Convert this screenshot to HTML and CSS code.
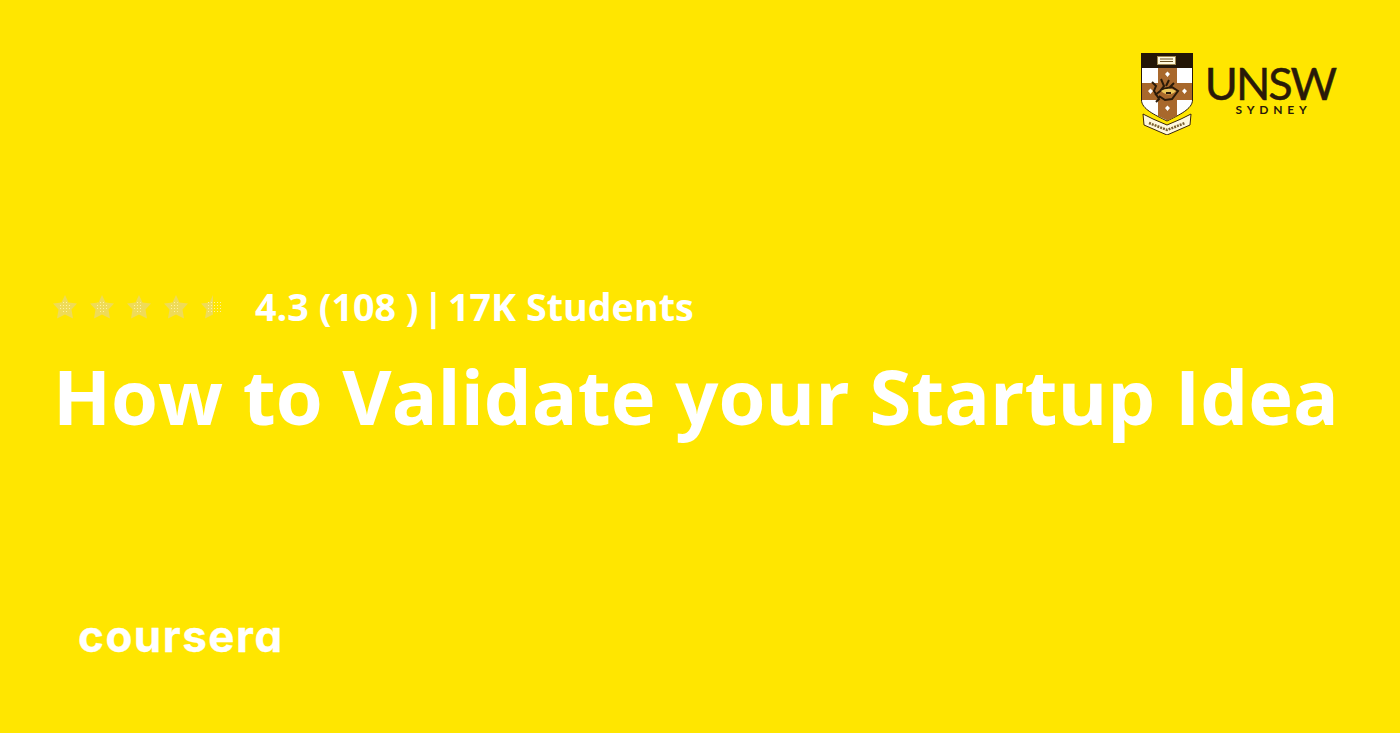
FILE: index.html
```html
<!DOCTYPE html>
<html lang="en">
<head>
<meta charset="utf-8">
<title>How to Validate your Startup Idea</title>
<link rel="stylesheet" href="styles.css">
</head>
<body>
<svg class="defs" width="0" height="0" aria-hidden="true">
  <defs>
    <pattern id="dots" width="3" height="3" patternUnits="userSpaceOnUse">
      <rect x="1" y="1" width="1" height="1" fill="#fff3a0"/>
    </pattern>
    <path id="star" d="M12 0 L15.500 7.500 L24 8.500 L18.500 14.600 L20 23.500 L12 19.500 L4 23.500 L5.500 14.600 L0 8.500 L8.500 7.500 Z"/>
  </defs>
</svg>
<main class="card">
  <header class="partner">
    <svg class="crest" width="52" height="82" viewBox="0 0 52 82" aria-hidden="true">
      <path d="M0.500 0.500H51.500V47C51.500 56 38 62 26 68C14 62 0.500 56 0.500 47Z" fill="#fff" stroke="#2a1a08"/>
      <rect width="52" height="15" fill="#241606"/>
      <rect x="16.500" y="3.500" width="18" height="8" fill="#fff8dc" stroke="#a08850"/>
      <path d="M19 6H32M19 8.500H32" stroke="#6a5020" stroke-width="1"/>
      <path d="M17 15H36V30H51V47H36V63L26.500 67.500L17 63V47H1V30H17Z" fill="#a8682c"/>
      <path d="M7 38l2.500-2.500 2.500 2.500-2.500 3zM41 38l2.500-2.500 2.500 2.500-2.500 3zM24 21l2.500-2.500 2.500 2.500-2.500 3zM24 55l2.500-2.500 2.500 2.500-2.500 3z" fill="#fff"/>
      <path d="M11 29L15 33L13 38L18 46L15 49M20 26L23 33L19 38M28 27L25 33M33 30L28 35M14 42L22 36L31 34L37 38L31 46L24 47L18 43" fill="none" stroke="#2a1a08" stroke-width="2"/>
      <path d="M20 38C25 35 30 35 35 38C31 42 25 43 20 38Z" fill="#ecc85c"/>
      <path d="M25 39h5v2h-5z" fill="#2a1a08"/>
      <path d="M2 61L12 66L26 72L40 66L50 61L49 72L26 82L3 72Z" fill="#fff8dc" stroke="#3a2408"/>
      <path d="M8 70L26 77L44 70" fill="none" stroke="#7a6030" stroke-width="2.500" stroke-dasharray="2 1"/>
    </svg>
    <div class="wordmark">
      <span class="unsw">UNSW</span>
      <span class="sydney">SYDNEY</span>
    </div>
  </header>
  <section class="course">
    <div class="meta">
      <div class="stars" aria-label="4.3 out of 5 stars">
        <svg class="star" width="24" height="24" viewBox="0 0 24 24"><use href="#star" fill="#efdb58"/><ellipse cx="12" cy="12" rx="5.500" ry="6.500" fill="url(#dots)"/></svg>
        <svg class="star" width="24" height="24" viewBox="0 0 24 24"><use href="#star" fill="#efdb58"/><ellipse cx="12" cy="12" rx="5.500" ry="6.500" fill="url(#dots)"/></svg>
        <svg class="star" width="24" height="24" viewBox="0 0 24 24"><use href="#star" fill="#efdb58"/><ellipse cx="11" cy="12" rx="5" ry="5.500" fill="url(#dots)"/></svg>
        <svg class="star" width="24" height="24" viewBox="0 0 24 24"><use href="#star" fill="#efdb58"/><ellipse cx="11" cy="12" rx="5" ry="5.500" fill="url(#dots)"/></svg>
        <svg class="star" width="24" height="24" viewBox="0 0 24 24"><path d="M12 0V19.500L4 23.500L5.500 14.600L0 8.500L8.500 7.500Z" fill="#efdb58"/><rect x="7" y="7" width="4" height="11" fill="url(#dots)"/><rect x="13" y="7" width="7" height="10" fill="url(#dots)"/></svg>
      </div>
      <p class="stats">4.3 (108 )<span class="sep"> | </span>17K Students</p>
    </div>
    <h1 class="title">How to Validate your Startup Idea</h1>
  </section>
  <footer class="brand">coursera</footer>
</main>
</body>
</html>
```
FILE: styles.css
```css
html, body {
  margin: 0;
  padding: 0;
  height: 100%;
  overflow: hidden;
  background: #ffe600;
}

.defs {
  display: block;
  height: 0;
}

.card {
  display: flex;
  flex-direction: column;
  height: 733px;
  box-sizing: border-box;
  padding: 53px 64px 0 53px;
  background: #ffe600;
  color: #fff;
  font-family: "Open Sans", "Liberation Sans", sans-serif;
}

.partner {
  display: flex;
  justify-content: flex-end;
  align-items: flex-start;
  gap: 14px;
  height: 82px;
}

.crest {
  display: block;
  flex: none;
}

.wordmark {
  display: flex;
  flex-direction: column;
  align-items: center;
  width: 129px;
  color: #2a1a08;
  padding-top: 12px;
  font-family: "Lato", "Liberation Sans", sans-serif;
}

.unsw {
  font-size: 45px;
  line-height: 36px;
  letter-spacing: -2px;
  margin-right: 3px;
  -webkit-text-stroke: 0.500px #2a1a08;
  white-space: nowrap;
}

.sydney {
  font-size: 12px;
  line-height: 12px;
  font-weight: 700;
  letter-spacing: 4.800px;
  margin-top: 3px;
  margin-left: 4px;
}

.course {
  margin-top: 147px;
}

.meta {
  display: flex;
  align-items: center;
}

.stars {
  display: flex;
  gap: 13px;
  width: 202px;
}

.star {
  display: block;
}

.stats {
  margin: 0;
  font-size: 37.700px;
  line-height: 50px;
  font-weight: 700;
}

.sep {
  word-spacing: -5.500px;
}

.title {
  margin: 14px 0 0;
  font-size: 75.900px;
  line-height: 100px;
  font-weight: 700;
  white-space: nowrap;
}

.brand {
  margin-top: 165px;
  margin-left: 25px;
  font-family: "Inter", "Liberation Sans", sans-serif;
  font-size: 44px;
  line-height: 50px;
  font-weight: 700;
  letter-spacing: 1.500px;
  font-feature-settings: "cv11";
  -webkit-text-stroke: 0.300px #fff;
}
```
